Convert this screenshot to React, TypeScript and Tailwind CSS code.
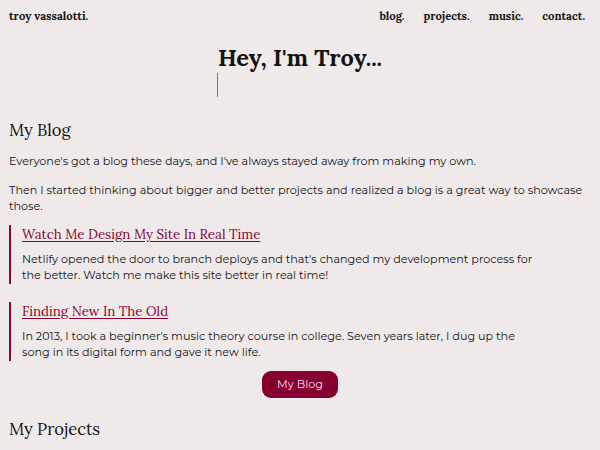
import React from 'react';

const serif = 'font-["Lora","DejaVu_Serif","Liberation_Serif",serif]';
const sans = 'font-["Montserrat","DejaVu_Sans","Open_Sans",sans-serif]';

const POSTS = [
  {
    title: 'Watch Me Design My Site In Real Time',
    body: "Netlify opened the door to branch deploys and that's changed my development process for the better. Watch me make this site better in real time!",
  },
  {
    title: 'Finding New In The Old',
    body: "In 2013, I took a beginner's music theory course in college. Seven years later, I dug up the song in its digital form and gave it new life.",
  },
];

export default function App() {
  return (
    <div className={`min-h-[450px] bg-[#efe9e9] text-[#141414] ${sans}`}>
      <header className={`flex items-center justify-between px-[9px] pt-[8px] ${serif} text-[11.2px] font-bold`}>
        <span>troy vassalotti.</span>
        <nav className="flex gap-[19px] pr-[6px]">
          <span>blog.</span>
          <span>projects.</span>
          <span>music.</span>
          <span>contact.</span>
        </nav>
      </header>

      <div className="flex flex-col items-center mt-[16px]">
        <h1 className={`${serif} text-[23.5px] font-bold leading-[32px]`}>Hey, I'm Troy...</h1>
        <div className="self-start ml-[217px] w-px h-[24px] bg-[#777]" />
      </div>

      <main className="px-[9px]">
        <h2 className={`${serif} text-[16.6px] mt-[21px] leading-[24px]`}>My Blog</h2>
        <p className="text-[11.2px] leading-[17px] mt-[11px]">
          Everyone's got a blog these days, and I've always stayed away from making my own.
        </p>
        <p className="text-[11.2px] leading-[16px] mt-[12px]">
          Then I started thinking about bigger and better projects and realized a blog is a great way to showcase those.
        </p>

        <div className="flex flex-col gap-[18px] mt-[11px]">
          {POSTS.map(p => (
            <article key={p.title} className="border-l-2 border-[#8a0a34] pl-[11px]">
              <a className={`block ${serif} text-[13.3px] leading-[20px] text-[#860032] underline underline-offset-2`}>
                {p.title}
              </a>
              <p className="text-[11.2px] leading-[16.5px] mt-[6px] max-w-[520px]">{p.body}</p>
            </article>
          ))}
        </div>

        <div className="flex justify-center mt-[10px]">
          <button className="bg-[#860032] text-[#f5dfe6] text-[11.2px] rounded-[9px] px-[15px] h-[27px]">
            My Blog
          </button>
        </div>

        <h2 className={`${serif} text-[16.6px] mt-[19px] leading-[24px]`}>My Projects</h2>
      </main>
    </div>
  );
}
